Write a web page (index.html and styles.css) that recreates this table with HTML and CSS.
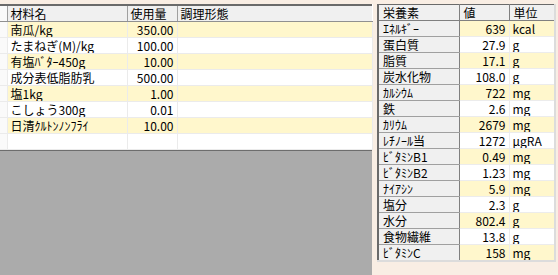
FILE: index.html
```html
<!DOCTYPE html>
<html lang="ja">
<head>
<meta charset="utf-8">
<link rel="stylesheet" href="styles.css">
</head>
<body>
<div class="left">
  <table class="grid">
    <colgroup><col class="c0"><col class="c1"><col class="c2"><col class="c3"></colgroup>
    <thead>
      <tr><th class="rh"></th><th>材料名</th><th>使用量</th><th>調理形態</th></tr>
    </thead>
    <tbody>
      <tr class="y"><td class="rh"></td><td>南瓜/kg</td><td class="num">350.00</td><td></td></tr>
      <tr><td class="rh"></td><td>たまねぎ(M)/kg</td><td class="num">100.00</td><td></td></tr>
      <tr class="y"><td class="rh"></td><td>有塩ﾊﾞﾀｰ450g</td><td class="num">10.00</td><td></td></tr>
      <tr><td class="rh"></td><td>成分表低脂肪乳</td><td class="num">500.00</td><td></td></tr>
      <tr class="y"><td class="rh"></td><td>塩1kg</td><td class="num">1.00</td><td></td></tr>
      <tr><td class="rh"></td><td>こしょう300g</td><td class="num">0.01</td><td></td></tr>
      <tr class="y"><td class="rh"></td><td>日清ｸﾙﾄﾝﾉﾝﾌﾗｲ</td><td class="num">10.00</td><td></td></tr>
      <tr><td class="rh"></td><td></td><td></td><td></td></tr>
    </tbody>
  </table>
  <div class="empty"></div>
</div>
<div class="right">
  <table class="nut">
    <colgroup><col class="n0"><col class="n1"><col class="n2"></colgroup>
    <thead>
      <tr><th>栄養素</th><th>値</th><th>単位</th></tr>
    </thead>
    <tbody>
      <tr class="y"><th>ｴﾈﾙｷﾞｰ</th><td class="num">639</td><td>kcal</td></tr>
      <tr><th>蛋白質</th><td class="num">27.9</td><td>g</td></tr>
      <tr class="y"><th>脂質</th><td class="num">17.1</td><td>g</td></tr>
      <tr><th>炭水化物</th><td class="num">108.0</td><td>g</td></tr>
      <tr class="y"><th>ｶﾙｼｳﾑ</th><td class="num">722</td><td>mg</td></tr>
      <tr><th>鉄</th><td class="num">2.6</td><td>mg</td></tr>
      <tr class="y"><th>ｶﾘｳﾑ</th><td class="num">2679</td><td>mg</td></tr>
      <tr><th>ﾚﾁﾉｰﾙ当</th><td class="num">1272</td><td>μgRA</td></tr>
      <tr class="y"><th>ﾋﾞﾀﾐﾝB1</th><td class="num">0.49</td><td>mg</td></tr>
      <tr><th>ﾋﾞﾀﾐﾝB2</th><td class="num">1.23</td><td>mg</td></tr>
      <tr class="y"><th>ﾅｲｱｼﾝ</th><td class="num">5.9</td><td>mg</td></tr>
      <tr><th>塩分</th><td class="num">2.3</td><td>g</td></tr>
      <tr class="y"><th>水分</th><td class="num">802.4</td><td>g</td></tr>
      <tr><th>食物繊維</th><td class="num">13.8</td><td>g</td></tr>
      <tr class="y"><th>ﾋﾞﾀﾐﾝC</th><td class="num">158</td><td>mg</td></tr>
    </tbody>
  </table>
</div>
</body>
</html>
```
FILE: styles.css
```css
html, body {
  margin: 0;
  padding: 0;
}
body {
  width: 558px;
  height: 275px;
  overflow: hidden;
  background: #f9eee4;
  display: flex;
  font-family: "Noto Sans CJK JP", "DejaVu Sans", sans-serif;
  font-size: 12px;
  color: #000;
}
.left {
  width: 372px;
  padding-top: 4px;
  display: flex;
  flex-direction: column;
}
.grid {
  border-collapse: collapse;
  table-layout: fixed;
  width: 372px;
  border-top: 2px solid #6a6a6a;
  background: #fff;
}
.c0 { width: 7px; }
.c1 { width: 120px; }
.c2 { width: 50px; }
.c3 { width: 195px; }
.grid th, .grid td {
  height: 15px;
  padding: 0 3px;
  line-height: 15px;
  white-space: nowrap;
  overflow: hidden;
  text-align: left;
  font-weight: normal;
  border-right: 1px solid #ebebeb;
  border-bottom: 1px solid #ebebeb;
}
.grid th {
  height: 15px;
  background: #f0f0f0;
  border-right: 1px solid #a0a0a0;
  border-bottom: 1px solid #909090;
}
.grid th:last-child { border-right: none; }
.grid .rh { padding: 0; background: #fafafa; }
.grid tr.y td { background: #fff7cc; }
.grid tr.y td.rh { background: #fafafa; }
.grid td.num { text-align: right; }
.empty {
  flex: 1;
  background: #ababab;
  border-top: 1px solid #6d6d6d;
}
.right {
  padding: 4px 0 0 5px;
}
.nut {
  border-collapse: collapse;
  table-layout: fixed;
  width: 177px;
  border-top: 1px solid #6a6a6a;
  border-left: 2px solid #6a6a6a;
  border-right: 2px solid #dcdcdc;
  border-bottom: 2px solid #dcdcdc;
  background: #fff;
}
.n0 { width: 81px; }
.n1 { width: 50px; }
.n2 { width: 46px; }
.nut th, .nut td {
  height: 15px;
  line-height: 14px;
  padding: 0 3px;
  white-space: nowrap;
  overflow: hidden;
  text-align: left;
  font-weight: normal;
}
.nut th {
  background: #f0f0f0;
  border-right: 1px solid #808080;
  border-bottom: 1px solid #a0a0a0;
  padding-left: 4px;
}
.nut thead th { border-bottom: 1px solid #808080; }
.nut thead th:last-child { border-right: none; }
.nut td {
  border-right: 1px solid #ececec;
  border-bottom: 1px solid #ececec;
}
.nut td:last-child { border-right: none; }
.nut tr.y td { background: #fff7cc; }
.nut td.num { text-align: right; padding-right: 3px; }
```
